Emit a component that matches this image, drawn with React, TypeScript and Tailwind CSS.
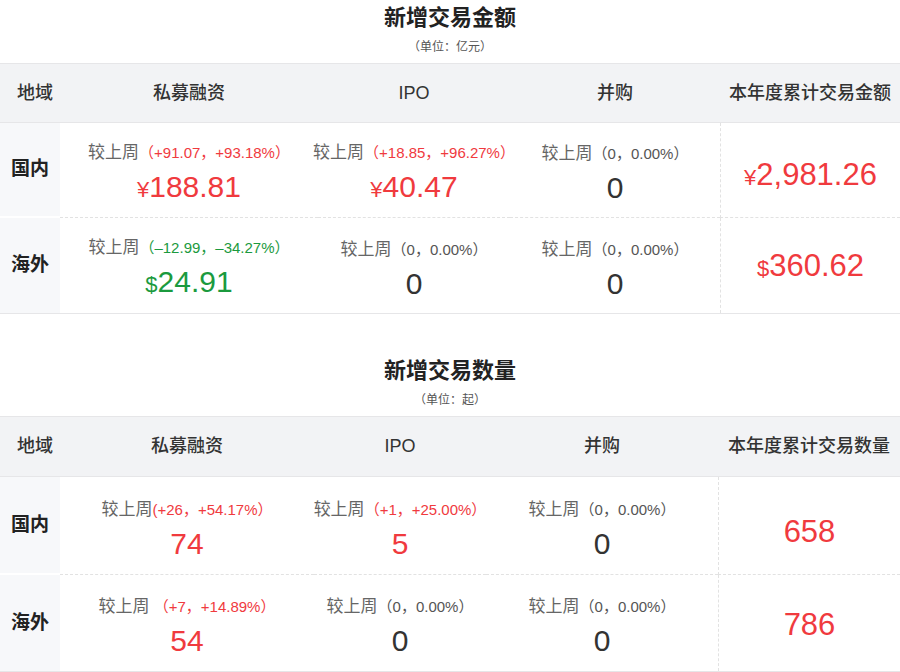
type Tone = 'up' | 'down' | 'flat';

interface Cell {
  change: string;
  tone: Tone;
  prefix?: string;
  value: string;
}

interface Row {
  region: string;
  cells: Cell[];
  total: { prefix?: string; value: string };
}

interface TableData {
  title: string;
  unit: string;
  totalLabel: string;
  grid: string;
  headH: string;
  rowH: string[];
  rows: Row[];
}

const changeColor: Record<Tone, string> = {
  up: 'text-[#f03a3e]',
  down: 'text-[#1b9a3e]',
  flat: 'text-[#555]',
};

const valueColor: Record<Tone, string> = {
  up: 'text-[#f03a3e]',
  down: 'text-[#1b9a3e]',
  flat: 'text-[#333]',
};

const flat: Cell = { change: '（0，0.00%）', tone: 'flat', value: '0' };

const tables: TableData[] = [
  {
    title: '新增交易金额',
    unit: '（单位：亿元）',
    totalLabel: '本年度累计交易金额',
    grid: 'grid-cols-[60px_258px_192px_210px_1fr]',
    headH: 'h-[60px]',
    rowH: ['h-[95px]', 'h-[96px]'],
    rows: [
      {
        region: '国内',
        cells: [
          { change: '（+91.07，+93.18%）', tone: 'up', prefix: '¥', value: '188.81' },
          { change: '（+18.85，+96.27%）', tone: 'up', prefix: '¥', value: '40.47' },
          flat,
        ],
        total: { prefix: '¥', value: '2,981.26' },
      },
      {
        region: '海外',
        cells: [
          { change: '（–12.99，–34.27%）', tone: 'down', prefix: '$', value: '24.91' },
          flat,
          flat,
        ],
        total: { prefix: '$', value: '360.62' },
      },
    ],
  },
  {
    title: '新增交易数量',
    unit: '（单位：起）',
    totalLabel: '本年度累计交易数量',
    grid: 'grid-cols-[60px_254px_172px_232px_1fr]',
    headH: 'h-[61px]',
    rowH: ['h-[98px]', 'h-[97px]'],
    rows: [
      {
        region: '国内',
        cells: [
          { change: '(+26，+54.17%）', tone: 'up', value: '74' },
          { change: '（+1，+25.00%）', tone: 'up', value: '5' },
          flat,
        ],
        total: { value: '658' },
      },
      {
        region: '海外',
        cells: [
          { change: ' （+7，+14.89%）', tone: 'up', value: '54' },
          flat,
          flat,
        ],
        total: { value: '786' },
      },
    ],
  },
];

const headers = ['私募融资', 'IPO', '并购'];

const DataTable = ({ table }: { table: TableData }) => {
  return (
    <section>
      {/* Title */}
      <div className="flex flex-col items-center pt-[4px] pb-[7px]">
        <h2 className="text-[22px] leading-[28px] font-bold text-[#222]">{table.title}</h2>
        <p className="mt-[6px] text-[12px] leading-[18px] text-[#555]">{table.unit}</p>
      </div>

      {/* Header */}
      <div className={`grid ${table.grid} ${table.headH} bg-[#f2f3f5] border-y border-[#e6e6e8] text-[18px] font-medium text-[#333]`}>
        <div className="flex items-center pl-[17px]">地域</div>
        {headers.map((h) => (
          <div key={h} className="flex items-center justify-center">
            {h}
          </div>
        ))}
        <div className="flex items-center justify-center whitespace-nowrap">{table.totalLabel}</div>
      </div>

      {/* Rows */}
      {table.rows.map((row, ri) => {
        const last = ri === table.rows.length - 1;
        return (
          <div
            key={row.region}
            className={`grid ${table.grid} ${table.rowH[ri]} ${last ? 'border-b border-[#e6e6e8]' : ''}`}
          >
            <div
              className={`flex items-center justify-center bg-[#f7f8fa] text-[19px] font-bold text-[#222] ${
                last ? '' : 'border-b-2 border-white'
              }`}
            >
              {row.region}
            </div>
            {row.cells.map((c, ci) => (
              <div
                key={ci}
                className={`flex flex-col items-center justify-center pt-[8px] ${
                  last ? '' : 'border-b border-dashed border-[#e2e2e2]'
                }`}
              >
                <div className="leading-[24px] whitespace-pre">
                  <span className="text-[17px] text-[#666]">较上周</span>
                  <span className={`text-[15px] ${changeColor[c.tone]}`}>{c.change}</span>
                </div>
                <div className={`mt-[4px] text-[30px] leading-[36px] ${valueColor[c.tone]}`}>
                  {c.prefix && <span className="text-[22px]">{c.prefix}</span>}
                  {c.value}
                </div>
              </div>
            ))}
            <div
              className={`flex items-center justify-center border-l border-dashed border-[#e2e2e2] ${
                last ? 'pt-[4px]' : 'border-b pt-[12px]'
              }`}
            >
              <div className="text-[31px] leading-[36px] text-[#f03a3e]">
                {row.total.prefix && <span className="text-[22px]">{row.total.prefix}</span>}
                {row.total.value}
              </div>
            </div>
          </div>
        );
      })}
    </section>
  );
};

const App = () => {
  return (
    <div className="w-[900px] h-[672px] overflow-hidden bg-white font-['Liberation_Sans','Noto_Sans_CJK_SC',sans-serif]">
      <DataTable table={tables[0]} />
      <div className="h-[39px]" />
      <DataTable table={tables[1]} />
    </div>
  );
};

export default App;
